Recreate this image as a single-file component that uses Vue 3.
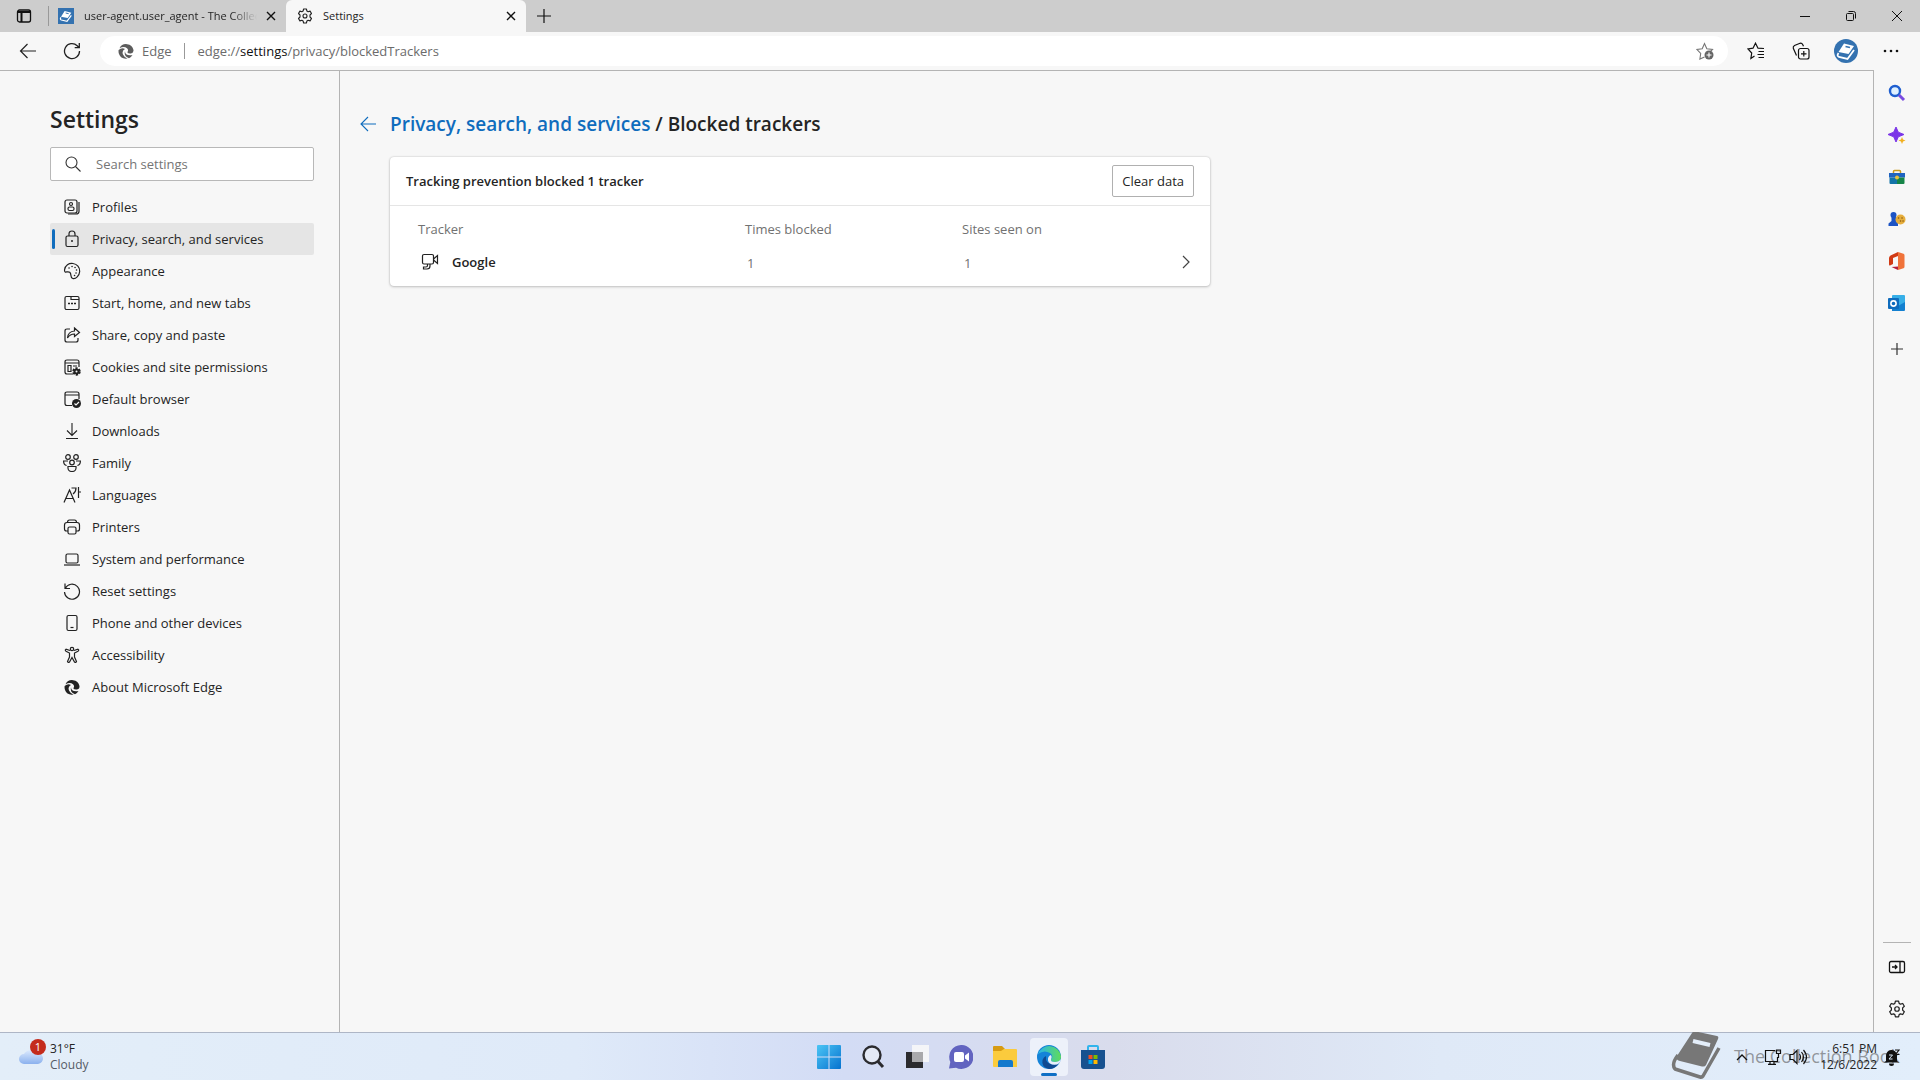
<template>
  <div class="screen">
    <header class="tab-strip">
      <button class="tab-actions" aria-label="Tab actions menu">
        <svg width="16" height="16" viewBox="0 0 16 16" fill="none" stroke="#111" stroke-width="1.3">
          <rect x="1.5" y="2" width="13" height="12" rx="2" />
          <path d="M1.5 4h13M5.5 4v10" stroke-width="2" />
        </svg>
      </button>
      <div class="tab">
        <svg class="tab-icon" width="16" height="16" viewBox="0 0 24 24">
          <rect width="24" height="24" fill="#3472b0" />
          <g v-html="bookIcon" />
        </svg>
        <span class="tab-title fade">user-agent.user_agent - The Collection Book</span>
        <button class="tab-close" aria-label="Close tab" v-html="closeIcon"></button>
      </div>
      <div class="tab active">
        <svg class="tab-icon" width="16" height="16" viewBox="0 0 16 16" v-html="gearIcon" />
        <span class="tab-title">Settings</span>
        <button class="tab-close" aria-label="Close tab" v-html="closeIcon"></button>
      </div>
      <button class="new-tab" aria-label="New tab">
        <svg width="14" height="14" viewBox="0 0 14 14" stroke="#111" stroke-width="1.2"><path d="M7 0v14M0 7h14" /></svg>
      </button>
      <div class="window-controls">
        <button aria-label="Minimize"><svg width="12" height="12" viewBox="0 0 12 12" stroke="#111"><path d="M1 6.5h10" /></svg></button>
        <button aria-label="Restore">
          <svg width="12" height="12" viewBox="0 0 12 12" fill="none" stroke="#111">
            <rect x="1.5" y="3.5" width="7" height="7" rx="1" />
            <path d="M3.5 1.5h5a2 2 0 0 1 2 2v5" />
          </svg>
        </button>
        <button aria-label="Close"><svg width="12" height="12" viewBox="0 0 12 12" stroke="#111"><path d="M1 1l10 10M11 1L1 11" /></svg></button>
      </div>
    </header>

    <div class="toolbar">
      <button class="tool" aria-label="Back">
        <svg width="18" height="18" viewBox="0 0 18 18" fill="none" stroke="#222" stroke-width="1.2"><path d="M17 9H2M8.5 2l-7 7 7 7" /></svg>
      </button>
      <button class="tool" aria-label="Refresh">
        <svg width="18" height="18" viewBox="0 0 18 18" fill="none" stroke="#222" stroke-width="1.3"><path d="M16.5 9a7.5 7.5 0 1 1-2.3-5.3l1.8 1.8M16.3 1v4.7h-4.6" /></svg>
      </button>
      <div class="address-bar">
        <svg width="16" height="16" viewBox="0 0 16 16" class="edge-gray" v-html="edgeMono" />
        <span class="site-name">Edge</span>
        <div class="url">edge://<b>settings</b>/privacy/blockedTrackers</div>
        <button aria-label="Add this page to favorites">
          <svg width="18" height="18" viewBox="0 0 18 18" fill="none" stroke="#767676" stroke-width="1.1">
            <path d="M8.5 15l-4.6 2 .8-5.5L1 7.500l5.200-.8L8.500 1.500l2.300 5.200 5.700.8-2 2" />
            <circle cx="13" cy="13" r="4.5" fill="#666" stroke="none" />
            <path d="M13 10.500v5M10.500 13h5" stroke="#fff" />
          </svg>
        </button>
      </div>
      <div class="toolbar-end">
        <button class="tool wide" aria-label="Favorites">
          <svg width="18" height="18" viewBox="0 0 18 18" fill="none" stroke="#111" stroke-width="1.2">
            <path d="M7.500 14l-3.600 2.500.8-5.500L1 7l5-.8 2.500-5L11 6.200l6 .3M11.500 9.500H17M10.500 12.500H17M11.500 15.500H17" />
          </svg>
        </button>
        <button class="tool wide" aria-label="Collections">
          <svg width="18" height="18" viewBox="0 0 18 18" fill="none" stroke="#111" stroke-width="1.2">
            <rect x="6.5" y="6.5" width="10.5" height="10.5" rx="2" />
            <path d="M11.800 9v5.500M9 11.800h5.500M4.500 13.500L1.300 6.300Q.8 4.500 2.500 3.500L8 1.300q1.800-.5 2.800 1.400l.7 1.600" />
          </svg>
        </button>
        <button class="tool wide" aria-label="Profile">
          <svg width="24" height="24" viewBox="0 0 24 24">
            <circle cx="12" cy="12" r="12" fill="#3472b0" />
            <g v-html="bookIcon" />
          </svg>
        </button>
        <button class="tool wide" aria-label="Settings and more">
          <svg width="16" height="4" viewBox="0 0 16 4" fill="#111"><circle cx="2" cy="2" r="1.3" /><circle cx="8" cy="2" r="1.3" /><circle cx="14" cy="2" r="1.3" /></svg>
        </button>
      </div>
    </div>

    <div class="workspace">
      <div class="page">
        <aside class="settings-menu">
          <h1>Settings</h1>
          <label class="search-box">
            <svg width="16" height="16" viewBox="0 0 16 16" fill="none" stroke="#333" stroke-width="1.1"><circle cx="6.5" cy="6.5" r="5.5" /><path d="M10.500 10.500l5 5" /></svg>
            <input type="search" placeholder="Search settings" aria-label="Search settings" />
          </label>
          <nav>
            <a v-for="item in menu" :key="item.label" href="#" :class="{ selected: item.selected }">
              <svg width="18" height="18" viewBox="0 0 18 18" fill="none" stroke="#222" stroke-width="1.2" v-html="item.icon" />
              <span>{{ item.label }}</span>
            </a>
          </nav>
        </aside>

        <main>
          <div class="breadcrumb">
            <button class="back" aria-label="Go back">
              <svg width="16" height="16" viewBox="0 0 16 16" fill="none" stroke="#0f6cbd" stroke-width="1.1"><path d="M16 8H1M8 1L1 8l7 7" /></svg>
            </button>
            <h2><a href="#">Privacy, search, and services</a> / Blocked trackers</h2>
          </div>
          <section class="card">
            <div class="card-head">
              <h3>Tracking prevention blocked 1 tracker</h3>
              <button class="clear">Clear data</button>
            </div>
            <table>
              <thead>
                <tr>
                  <th class="col-name">Tracker</th>
                  <th class="col-times">Times blocked</th>
                  <th>Sites seen on</th>
                  <td></td>
                </tr>
              </thead>
              <tbody>
                <tr v-for="row in trackers" :key="row.name">
                  <td>
                    <div class="tracker-name">
                      <svg width="18" height="18" viewBox="0 0 18 18" fill="none" stroke="#222" stroke-width="1.2">
                        <rect x="1.5" y="1.5" width="11" height="9.5" rx="1.5" />
                        <path d="M12.500 6l4-3.500v8l-4-3.500M9 11v2q0 3-3 3H2.500v-2H5q1.500 0 1.500-1.500V11" />
                      </svg>
                      <span>{{ row.name }}</span>
                    </div>
                  </td>
                  <td class="count">{{ row.blocked }}</td>
                  <td class="count">{{ row.sites }}</td>
                  <td class="col-open">
                    <button aria-label="Show sites">
                      <svg width="8" height="14" viewBox="0 0 8 14" fill="none" stroke="#444" stroke-width="1.2"><path d="M1 1l6 6-6 6" /></svg>
                    </button>
                  </td>
                </tr>
              </tbody>
            </table>
          </section>
        </main>
      </div>

      <aside class="edge-bar">
        <button v-for="app in sideApps" :key="app.name" :aria-label="app.name">
          <svg width="18" height="18" viewBox="0 0 18 18" v-html="app.icon" />
        </button>
        <button class="customize" aria-label="Customize">
          <svg width="18" height="18" viewBox="0 0 18 18" stroke="#333" stroke-width="1.2"><path d="M9 3v12M3 9h12" /></svg>
        </button>
        <div class="edge-bar-end">
          <button aria-label="Hide sidebar">
            <svg width="18" height="18" viewBox="0 0 18 18" fill="none" stroke="#111" stroke-width="1.3"><rect x="1.5" y="3.5" width="15" height="11" rx="1.5" /><path d="M12 3.500v11M4 9h5M7 7l2 2-2 2" /></svg>
          </button>
          <button aria-label="Sidebar settings">
            <svg width="18" height="18" viewBox="0 0 16 16" v-html="gearIcon" />
          </button>
        </div>
      </aside>
    </div>

    <footer class="taskbar">
      <div class="watermark">
        <svg width="52" height="48" viewBox="0 0 52 48">
          <path d="M22 1q1-2 4-1.500L47 4q2 .5 1 3L36 33q-1 2-4 1.500L10 29Q5 28 7 24z" fill="#777" />
          <path d="M8 23Q1 32 5 37l25 8q2 .5 3-1l16-28" fill="none" stroke="#777" stroke-width="3.5" stroke-linejoin="round" />
          <path d="M23 9l17 4" stroke="#e4eefa" stroke-width="4" />
        </svg>
        <span>The Collection Book</span>
      </div>
      <button class="weather">
        <svg width="28" height="36" viewBox="0 0 28 36">
          <defs>
            <linearGradient id="cloud" x1="0" y1="0" x2="0" y2="1"><stop offset="0" stop-color="#dbe9fd" /><stop offset="1" stop-color="#8bb1ee" /></linearGradient>
          </defs>
          <path d="M6 25a5 5 0 0 1 0-10A8 8 0 0 1 19 14a5.500 5.500 0 0 1 1 11z" fill="url(#cloud)" />
          <circle cx="20" cy="8" r="8" fill="#c42b1c" />
          <text x="20" y="12" text-anchor="middle" fill="#fff" font-size="11">1</text>
        </svg>
        <span class="weather-text">31°F<small>Cloudy</small></span>
      </button>
      <div class="task-apps">
        <button v-for="app in taskApps" :key="app.name" :class="{ running: app.running }" :aria-label="app.name">
          <svg width="24" height="24" viewBox="0 0 24 24" v-html="app.icon" />
        </button>
      </div>
      <div class="tray">
        <button aria-label="Show hidden icons">
          <svg width="12" height="8" viewBox="0 0 12 8" fill="none" stroke="#111" stroke-width="1.3"><path d="M1 7l5-5 5 5" /></svg>
        </button>
        <button class="status" aria-label="Network and volume">
          <svg width="18" height="16" viewBox="0 0 18 16" fill="none" stroke="#111" stroke-width="1.2"><path d="M11 1.500H1.500v11h12V8M4 15.300h8M6 12.500v2.500M10 12.500v2.500" /><path d="M12.500 1h4v3.500h-4zM14.500 4.500V9" /></svg>
          <svg width="18" height="16" viewBox="0 0 18 16" fill="none" stroke="#111" stroke-width="1.2"><path d="M1 5.500h3l4-4v13l-4-4H1zM10.500 5q2 3 0 6M12.500 3q4 5 0 10M14.500 1q6 7 0 14" /></svg>
        </button>
        <button class="clock">
          <span>6:51 PM</span>
          <span>12/6/2022</span>
        </button>
        <button aria-label="Notifications">
          <svg width="16" height="18" viewBox="0 0 16 18"><path d="M2 13V8a5.500 5.500 0 0 1 11-1v6l2 1.500H0zM5 15.500h5a2.500 2.500 0 0 1-5 0z" fill="#111" /><path d="M5 7h3.500L5 11h3.500" fill="none" stroke="#d8e8f8" /><path d="M11 2h4l-3.500 4.500h4" fill="none" stroke="#111" stroke-width="1.2" /></svg>
        </button>
      </div>
    </footer>
  </div>
</template>

<script setup>
const closeIcon = '<svg width="10" height="10" viewBox="0 0 10 10" stroke="#111" stroke-width="1.4"><path d="M1 1l8 8M9 1L1 9"/></svg>'

const bookIcon = '<path d="M10 4.500l10 2.500-5.500 8-10-2z" fill="#fff"/><path d="M4.500 14q-2 3 .5 4l8.500 2 6.500-9" fill="none" stroke="#fff" stroke-width="1.800"/><path d="M11.500 7.500l4.500 1" stroke="#3472b0" stroke-width="1.500"/>'

const gearIcon = '<path d="M6.600 1h2.800l.5 2 1.200.7 2-.6 1.400 2.400L13 7v2l1.500 1.500-1.400 2.400-2-.6-1.200.7-.5 2H6.600l-.5-2-1.200-.7-2 .6-1.400-2.400L3 9V7L1.500 5.500l1.400-2.400 2 .6L6.100 3z" fill="none" stroke="#222" stroke-width="1.100" stroke-linejoin="round"/><circle cx="8" cy="8" r="2" fill="none" stroke="#222" stroke-width="1.100"/>'

const edgeMono = '<path d="M1.500 5.200A7.500 7.500 0 0 1 15.500 7q.3 3-2.500 3.500-3 .3-3.700-1.200Q11 7 9 5.200 6 3 1.500 5.200zM.600 7Q4 4 7 6q-3.500 2-2 5.500 1.300 3 4.500 4Q3 16.500 1 11 .3 9 .6 7zM7 8.200q0 4.800 7.500 3.800-1.500 2.500-3.500 3.200Q5.500 13 7 8.200z" fill="currentColor" stroke="none"/>'

const menu = [
  { label: 'Profiles', icon: '<rect x="2" y="2" width="12" height="13" rx="2"/><circle cx="8" cy="6" r="1.500"/><rect x="5" y="9" width="6" height="3.500" rx="1.500"/><path d="M16 4v9.500q0 2.500-3 2.500H5"/>' },
  { label: 'Privacy, search, and services', selected: true, icon: '<rect x="3" y="6" width="12" height="10.500" rx="1.500"/><path d="M6 6V4q0-3 3-3t3 3v2"/><circle cx="9" cy="11" r="1" fill="#222" stroke="none"/>' },
  { label: 'Appearance', icon: '<path d="M1.500 8C2 3 6 1 10 1.500s7 4 6.700 8-4 8-7 7-.7-4.500-3-6.200S1.500 12 1.500 8z"/><path d="M9 4.500h.1M12 5.500h.1M13.500 8h.1M13 11h.1M11.500 13.500h.1M6 6h.1" stroke-linecap="round" stroke-width="1.500"/>' },
  { label: 'Start, home, and new tabs', icon: '<rect x="2" y="2.500" width="14" height="13" rx="1.500"/><path d="M8 2.500v3h8"/><path d="M5 9.500h2M8 9.500h2M11 9.500h2" stroke-width="1.600"/>' },
  { label: 'Share, copy and paste', icon: '<path d="M7 3H4q-2 0-2 2v9q0 2 2 2h9q2 0 2-2v-2"/><path d="M11.500 2l5 4.500-5 4V8Q7 8 4.500 12 5 5.500 11.500 5z"/>' },
  { label: 'Cookies and site permissions', icon: '<path d="M10 16H4q-2 0-2-2V4q0-2 2-2h10q2 0 2 2v5M2 5h14"/><path d="M5 7.500h3v6H5zM10 8h4"/><circle cx="13.500" cy="13.500" r="3" fill="#222" stroke-dasharray="2 1.200" stroke-width="2.500"/><circle cx="13.500" cy="13.500" r="1" fill="#f7f7f7" stroke="none"/>' },
  { label: 'Default browser', icon: '<path d="M9 15.500H4q-2 0-2-2V4q0-2 2-2h10q2 0 2 2v5M2 5h14"/><circle cx="13.500" cy="13.500" r="4.500" fill="#222" stroke="none"/><path d="M11.500 13.500l1.500 1.500 3-3" stroke="#f7f7f7"/>' },
  { label: 'Downloads', icon: '<path d="M9 1v12M4 8.500l5 5 5-5M3 16.500h12" stroke-width="1.100"/>' },
  { label: 'Family', icon: '<circle cx="5" cy="3" r="2.300"/><circle cx="13" cy="3" r="2.300"/><circle cx="9" cy="8.500" r="2.300"/><path d="M5 12.500h8q.5 5-4 5t-4-5zM5 7H.600q0 4 3 4.500M13 7h4.400q0 4-3 4.500"/>' },
  { label: 'Languages', icon: '<path d="M1 16.500L6.500 4 12 16.500M3 12.500h7M8.500 2h4.500q0 4-3 6M15.500 1v11M15.500 6H18"/>' },
  { label: 'Printers', icon: '<path d="M5 13H3.500Q1.500 13 1.500 11V7q0-2.500 2.500-2.500h10q2.500 0 2.500 2.500v4q0 2-2 2H13"/><rect x="5" y="9" width="8" height="7" rx="1.500"/><path d="M4.500 4.500q0-2.500 2-2.500h5q2 0 2 2.500"/>' },
  { label: 'System and performance', icon: '<rect x="3" y="4" width="12" height="9" rx="1.500"/><path d="M1 15h16"/>' },
  { label: 'Reset settings', icon: '<path d="M2 1.500v5h5M2.300 6.300A7.500 7.500 0 1 1 1.500 10"/>' },
  { label: 'Phone and other devices', icon: '<rect x="4" y="1.500" width="10" height="15" rx="1.500"/><path d="M7.500 13.500h3"/>' },
  { label: 'Accessibility', icon: '<circle cx="9" cy="3" r="1.700"/><path d="M7 4.500L3 3.200q-1.500.8 0 2L6.500 7v4L4.500 15.500q.5 1.500 2 .5L9 11.500l2.500 4.500q1.500 1 2-.5L11.500 11V7L15 5.200q1.500-1.200 0-2l-4 1.300"/>' },
  { label: 'About Microsoft Edge', icon: `<g transform="translate(1 1)" color="#222">${edgeMono}</g>` }
]

const trackers = [{ name: 'Google', blocked: 1, sites: 1 }]

const sideApps = [
  { name: 'Search', icon: '<circle cx="7" cy="7" r="5" fill="#dff1ff" stroke="#1f5fd0" stroke-width="2.400"/><path d="M11 11l5 5" stroke="#7a4be0" stroke-width="3"/>' },
  { name: 'Discover', icon: '<path d="M8 1l2.300 5.200L16 8.500l-5.700 2.300L8 16l-2.300-5.200L0 8.500l5.700-2.300z" fill="#7b35e8" stroke="#7b35e8" stroke-linejoin="round"/><path d="M14 11l1 2.500 2.500 1-2.500 1-1 2.500-1-2.500-2.500-1 2.500-1z" fill="#f2b01e"/>' },
  { name: 'Tools', icon: '<path d="M5.500 5V3.500q0-1 1-1h5q1 0 1 1V5" fill="none" stroke="#c99a1e" stroke-width="1.500"/><path d="M1 5h16v4.500H1z" fill="#1f63c0"/><path d="M1.500 9.500h8V16h-7q-1 0-1-1z" fill="#1474a8"/><path d="M9 9.500h7.500V15q0 1-1 1H9z" fill="#168548"/><circle cx="9" cy="9.500" r="2" fill="#e8c13c"/>' },
  { name: 'Games', icon: '<circle cx="5.500" cy="5" r="3" fill="#1d54c4"/><path d="M3.500 7h4.500v4l2 2.500V16H.500v-2.500l3-2.500z" fill="#1d54c4"/><circle cx="12.500" cy="9.500" r="5" fill="#e6ae3c"/><path d="M10.500 8h.1M14 8h.1M12.500 11h.1M15 11h.1" stroke="#8b5a10" stroke-width="1.500" stroke-linecap="round"/>' },
  { name: 'Office', icon: '<path d="M10 0L2.500 3.500Q1 4.500 1 6v6q0 2 1 1.500l3-1.500V6l5-2z" fill="#d13a14"/><path d="M10 0l5.500 1.700q1 .3 1 1.800v11q0 1.500-1 1.800L10 18z" fill="#f0733a"/><path d="M10 18l-6.500-3 6.500-.5z" fill="#b51d3a"/>' },
  { name: 'Outlook', icon: '<rect x="4" y="1" width="13" height="14" rx="1" fill="#37afe8"/><path d="M4 8l6 4 7-4v8q0 1-1 1H4z" fill="#1380d0"/><rect x="0" y="4" width="11" height="11" rx="1" fill="#0f6cbd"/><circle cx="5.500" cy="9.500" r="2.600" fill="none" stroke="#fff" stroke-width="1.600"/>' }
]

const taskApps = [
  { name: 'Start', icon: '<defs><linearGradient id="win" x1="0" y1="0" x2="1" y2="1"><stop offset="0" stop-color="#4cc5f5"/><stop offset="1" stop-color="#0672cf"/></linearGradient></defs><path d="M1 0h10.500v11.500H0V1q0-1 1-1zM12.500 0H23q1 0 1 1v10.500H12.500zM0 12.500h11.500V24H1q-1 0-1-1zM12.500 12.500H24V23q0 1-1 1H12.500z" fill="url(#win)"/>' },
  { name: 'Search', icon: '<circle cx="11" cy="10" r="8.500" fill="#e4e9f5" stroke="#2b2b2f" stroke-width="2.400"/><path d="M17 16.500l5 5.500" stroke="#2b2b2f" stroke-width="3"/>' },
  { name: 'Task view', icon: '<rect x="7" y="0" width="17" height="17" fill="#f4f5f8"/><rect x="1" y="7" width="17" height="16" fill="#2b2b2e"/><rect x="7" y="7" width="11" height="10" fill="#a9a9ac"/>' },
  { name: 'Chat', icon: '<path d="M12 0a12 12 0 1 1-5 22.700L0 23.500 1.300 17A12 12 0 0 1 12 0z" fill="#6264c0"/><rect x="5" y="7" width="10" height="10" rx="2" fill="#fff"/><path d="M16 10.500l4-3v9l-4-3z" fill="#fff"/>' },
  { name: 'File Explorer', icon: '<path d="M0 2q0-1 1-1h8l3 3-3 4H0z" fill="#d79b12"/><path d="M0 6h8l3-2h12q1 0 1 1v17H1q-1 0-1-1z" fill="#fbcb3d"/><path d="M5 22v-5q0-2 2-2h11q2 0 2 2v5z" fill="#1479cd"/>' },
  { name: 'Microsoft Edge', running: true, icon: '<defs><linearGradient id="edgeTop"><stop offset="0" stop-color="#2bb4ea"/><stop offset="1" stop-color="#5fdc5a"/></linearGradient></defs><circle cx="12" cy="12" r="12" fill="#1583d8"/><path d="M1 9A11.900 11.900 0 0 1 24 11.500Q24 17 18 17q-4.500 0-4-2.500 3-3.500-1-6.500Q7 4.500 1 9z" fill="url(#edgeTop)"/><path d="M9 11q-1 8 7 8.500 4 0 6-1.500-4 6-10 6Q4 22 5.500 15 6.500 12 9 11z" fill="#114a91"/><path d="M14 14.500q-.5 2.500 4 2.500 4 0 6-3-1 4.500-4 5.500-8 1-9-4Q10.500 11 14 10q1.500 2 0 4.500z" fill="#e9effa"/>' },
  { name: 'Microsoft Store', icon: '<path d="M7 6V2q0-1 1-1h8q1 0 1 1v4" fill="none" stroke="#31b4ec" stroke-width="2"/><path d="M0 5h24v16q0 3-3 3H3q-3 0-3-3z" fill="#17518f"/><path d="M7.500 10h4v4h-4z" fill="#f25022"/><path d="M12.500 10h4v4h-4z" fill="#7fba00"/><path d="M7.500 15h4v4h-4z" fill="#00a4ef"/><path d="M12.500 15h4v4h-4z" fill="#ffb900"/>' }
]
</script>

<style>
body {
  margin: 0;
}
</style>

<style scoped>
* {
  box-sizing: border-box;
}

.screen {
  display: flex;
  flex-direction: column;
  min-height: 100vh;
  background: #f7f7f7;
  color: #242424;
  font-family: 'Segoe UI', 'Open Sans', 'Noto Sans', sans-serif;
  font-size: 13px;
  line-height: 16px;
}

button {
  display: flex;
  align-items: center;
  justify-content: center;
  padding: 0;
  border: none;
  background: none;
  color: inherit;
  font: inherit;
}

svg {
  display: block;
  flex: none;
}

a {
  color: inherit;
  text-decoration: none;
}

h1,
h2,
h3 {
  margin: 0;
  font-weight: 600;
}

/* tab strip */
.tab-strip {
  display: flex;
  height: 32px;
  background: #cdcdcd;
  font-size: 11px;
}

.tab-actions {
  width: 48px;
}

.tab {
  display: flex;
  align-items: center;
  width: 240px;
  padding: 0 7px 0 11px;
}

.tab:not(.active) {
  position: relative;
  width: 238px;
  padding-left: 10px;
}

.tab:not(.active)::before {
  content: '';
  position: absolute;
  left: 0;
  top: 6px;
  height: 20px;
  border-left: 1px solid #999;
}

.tab.active {
  border-radius: 6px 6px 0 0;
  background: #f7f7f7;
}

.tab-title {
  flex: 1;
  margin: 0 6px 0 10px;
  overflow: hidden;
  white-space: nowrap;
}

.fade {
  mask-image: linear-gradient(to right, #000 85%, transparent);
}

.tab-close {
  width: 16px;
  height: 16px;
}

.new-tab {
  width: 36px;
}

.window-controls {
  display: flex;
  margin-left: auto;
}

.window-controls button {
  width: 46px;
}

/* toolbar */
.toolbar {
  display: flex;
  align-items: center;
  height: 38px;
  padding: 0 6px;
}

.tool {
  width: 44px;
  height: 30px;
}

.address-bar {
  display: flex;
  flex: 1;
  align-items: center;
  height: 30px;
  margin-left: 6px;
  padding: 0 14px 0 18px;
  border-radius: 15px;
  background: #fff;
  color: #6b6b6b;
}

.edge-gray {
  color: #5c5c5c;
}

.site-name {
  margin-left: 8px;
  padding-right: 12px;
  border-right: 1px solid #999;
}

.url {
  flex: 1;
  padding-left: 13px;
}

.url b {
  color: #111;
  font-weight: 400;
}

.toolbar-end {
  display: flex;
  margin: 0 1px 0 5px;
}

.wide {
  width: 45px;
}

/* page */
.workspace {
  display: flex;
  flex: 1;
}

.page {
  display: flex;
  flex: 1;
  border-top: 1px solid #b4b4b4;
  border-right: 1px solid #b4b4b4;
}

.settings-menu {
  width: 340px;
  padding: 32px 25px 32px 50px;
  border-right: 1px solid #b4b4b4;
}

h1 {
  font-size: 23px;
  line-height: 32px;
}

.search-box {
  display: flex;
  align-items: center;
  gap: 15px;
  height: 34px;
  margin: 12px 0 10px;
  padding: 0 14px;
  border: 1px solid #b8b8b8;
  border-radius: 2px;
  background: #fff;
}

.search-box input {
  flex: 1;
  min-width: 0;
  padding: 0;
  border: none;
  outline: none;
  background: none;
  font: inherit;
}

.search-box input::placeholder {
  color: #757575;
}

nav a {
  position: relative;
  display: flex;
  align-items: center;
  gap: 11px;
  height: 32px;
  padding-left: 13px;
  border-radius: 2px;
}

nav a.selected {
  background: #e5e5e5;
}

nav a.selected::before {
  content: '';
  position: absolute;
  left: 2px;
  top: 6px;
  width: 3px;
  height: 20px;
  border-radius: 2px;
  background: #0f6cbd;
}

main {
  flex: 1;
  padding: 40px 20px;
}

.breadcrumb {
  display: flex;
  align-items: center;
  height: 26px;
}

.back {
  width: 16px;
  margin-right: 14px;
}

h2 {
  font-size: 19px;
  line-height: 26px;
}

h2 a {
  color: #0f6cbd;
}

.card {
  max-width: 820px;
  margin: 20px 0 0 30px;
  padding-bottom: 8px;
  border-radius: 4px;
  background: #fff;
  box-shadow: 0 0 2px rgba(0, 0, 0, 0.2), 0 1px 3px rgba(0, 0, 0, 0.18);
}

.card-head {
  display: flex;
  align-items: center;
  justify-content: space-between;
  height: 49px;
  padding: 0 16px;
  border-bottom: 1px solid #e5e5e5;
}

h3 {
  font-size: 13px;
}

.clear {
  height: 32px;
  padding: 0 9px;
  border: 1px solid #b0b0b0;
  border-radius: 2px;
}

table {
  width: 100%;
  margin-top: 8px;
  border-collapse: collapse;
  table-layout: fixed;
}

th,
td {
  height: 32px;
  padding: 0;
  text-align: left;
}

th {
  padding-bottom: 2px;
  color: #717171;
  font-weight: 400;
}

.col-name {
  width: 355px;
  padding-left: 28px;
}

.col-times {
  width: 217px;
}

.tracker-name {
  display: flex;
  align-items: center;
  gap: 13px;
  padding-left: 31px;
  font-weight: 600;
}

.count {
  padding: 2px 0 0 2px;
  color: #717171;
}

.col-open button {
  width: 16px;
  height: 24px;
  margin: 0 16px 0 auto;
}

/* sidebar with apps */
.edge-bar {
  display: flex;
  flex-direction: column;
  align-items: center;
  width: 46px;
  padding-top: 2px;
}

.edge-bar button {
  width: 28px;
  height: 42px;
}

.edge-bar .customize {
  margin-top: 4px;
}

.edge-bar-end {
  margin-top: auto;
  padding-bottom: 2px;
  border-top: 1px solid #b4b4b4;
}

.edge-bar-end button:first-child {
  margin-top: 3px;
}

/* taskbar */
.taskbar {
  position: relative;
  display: flex;
  align-items: center;
  height: 48px;
  border-top: 1px solid #aeb6c6;
  background: linear-gradient(to right, #e3eef9, #dfeaf9 30%, #d3dcf5 44%, #d9dcec 58%, #dfe9f7 75%, #e2eefb);
  font-size: 12px;
}

.weather,
.tray {
  position: relative;
  flex: 1;
}

.weather {
  gap: 4px;
  justify-content: flex-start;
  padding-left: 18px;
}

.weather-text {
  display: flex;
  flex-direction: column;
  text-align: left;
}

small {
  color: #555b66;
  font-size: 12px;
}

.task-apps {
  display: flex;
  gap: 6px;
  padding-left: 3px;
}

.task-apps button {
  position: relative;
  width: 38px;
  height: 38px;
  border-radius: 4px;
}

.task-apps .running {
  background: #edf1fa;
}

.running::after {
  content: '';
  position: absolute;
  bottom: 0;
  left: 11px;
  width: 16px;
  height: 3px;
  border-radius: 2px;
  background: #0f6fc5;
}

.tray {
  display: flex;
  align-items: center;
  justify-content: flex-end;
  padding-right: 20px;
}

.status {
  gap: 7px;
  margin: 0 13px 0 16px;
}

.clock {
  flex-direction: column;
  align-items: flex-end;
  margin-right: 7px;
}

.watermark {
  position: absolute;
  right: 20px;
  bottom: 0;
  display: flex;
  align-items: center;
  gap: 12px;
  color: rgba(90, 90, 90, 0.6);
  font-size: 18px;
  line-height: 24px;
  pointer-events: none;
}
</style>
